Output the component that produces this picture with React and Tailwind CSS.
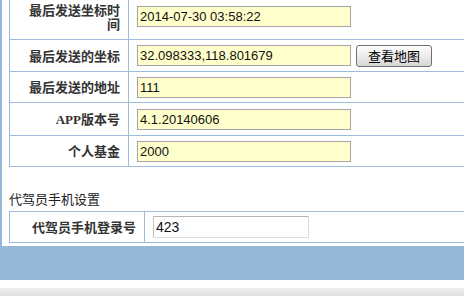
import React from "react";

const cjk = { fontFamily: '"Noto Sans CJK SC", "Liberation Sans", sans-serif' };
const arial = { fontFamily: '"Liberation Sans", "Noto Sans CJK SC", sans-serif' };

function Label({ children, w = "w-[119px]" }) {
  return (
    <div
      className={`${w} shrink-0 h-full border-r border-[#9dbbdc] flex items-center justify-end pl-[12px] pr-[8px] text-right text-[13px] leading-[14px] font-bold text-[#333333]`}
      style={cjk}
    >
      <span>{children}</span>
    </div>
  );
}

function YInput({ value }) {
  return (
    <div
      className="w-[214px] h-[21px] border border-[#a5a5a5] bg-[#ffffcc] px-[2px] flex items-center text-[13px] text-[#111] leading-none"
      style={arial}
    >
      {value}
    </div>
  );
}

function Row({ h, label, value, extra }) {
  return (
    <div className={`${h} flex border-b border-[#9dbbdc]`}>
      <Label>{label}</Label>
      <div className="flex items-center pl-[8px] gap-[4px]">
        <YInput value={value} />
        {extra}
      </div>
    </div>
  );
}

export default function App() {
  return (
    <div className="w-[464px] h-[296px] overflow-hidden bg-white">
      <div className="bg-[#97b7d9] pl-[2px] pb-[34px]">
        <div className="bg-white h-[246px] overflow-hidden pl-[7px]">
          <div className="-mt-[6px] w-[600px] border-l border-[#9dbbdc]">
            <Row
              h="h-[46px]"
              label="最后发送坐标时间"
              value="2014-07-30 03:58:22"
            />
            <Row
              h="h-[32px]"
              label="最后发送的坐标"
              value="32.098333,118.801679"
              extra={
                <button
                  className="ml-[1px] w-[76px] h-[22px] rounded-[3px] border border-[#707070] bg-gradient-to-b from-[#fdfdfd] via-[#ececec] to-[#d6d6d6] text-[13px] leading-none text-black"
                  style={cjk}
                >
                  查看地图
                </button>
              }
            />
            <Row h="h-[31px]" label="最后发送的地址" value="111" />
            <Row
              h="h-[33px]"
              label={
                <>
                  <span style={{ fontFamily: '"Liberation Serif", serif' }}>APP</span>
                  版本号
                </>
              }
              value="4.1.20140606"
            />
            <Row h="h-[31px]" label="个人基金" value="2000" />
          </div>

          <div
            className="mt-[24px] mb-[4px] text-[13px] leading-[16px] text-[#222]"
            style={cjk}
          >
            代驾员手机设置
          </div>

          <div className="w-[600px] h-[32px] flex border border-r-0 border-[#9dbbdc]">
            <Label w="w-[135px]">代驾员手机登录号</Label>
            <div className="flex items-center pl-[8px]">
              <div
                className="w-[156px] h-[22px] border border-[#dcdcdc] border-t-[#b5b5b5] border-l-[#c4c4c4] bg-white px-[2px] flex items-center text-[14px] leading-none text-[#111]"
                style={arial}
              >
                423
              </div>
            </div>
          </div>
        </div>
      </div>
      <div className="h-[8px] bg-white" />
      <div className="h-[8px] bg-gradient-to-b from-[#eeeeee] to-[#e0e0e0]" />
    </div>
  );
}
